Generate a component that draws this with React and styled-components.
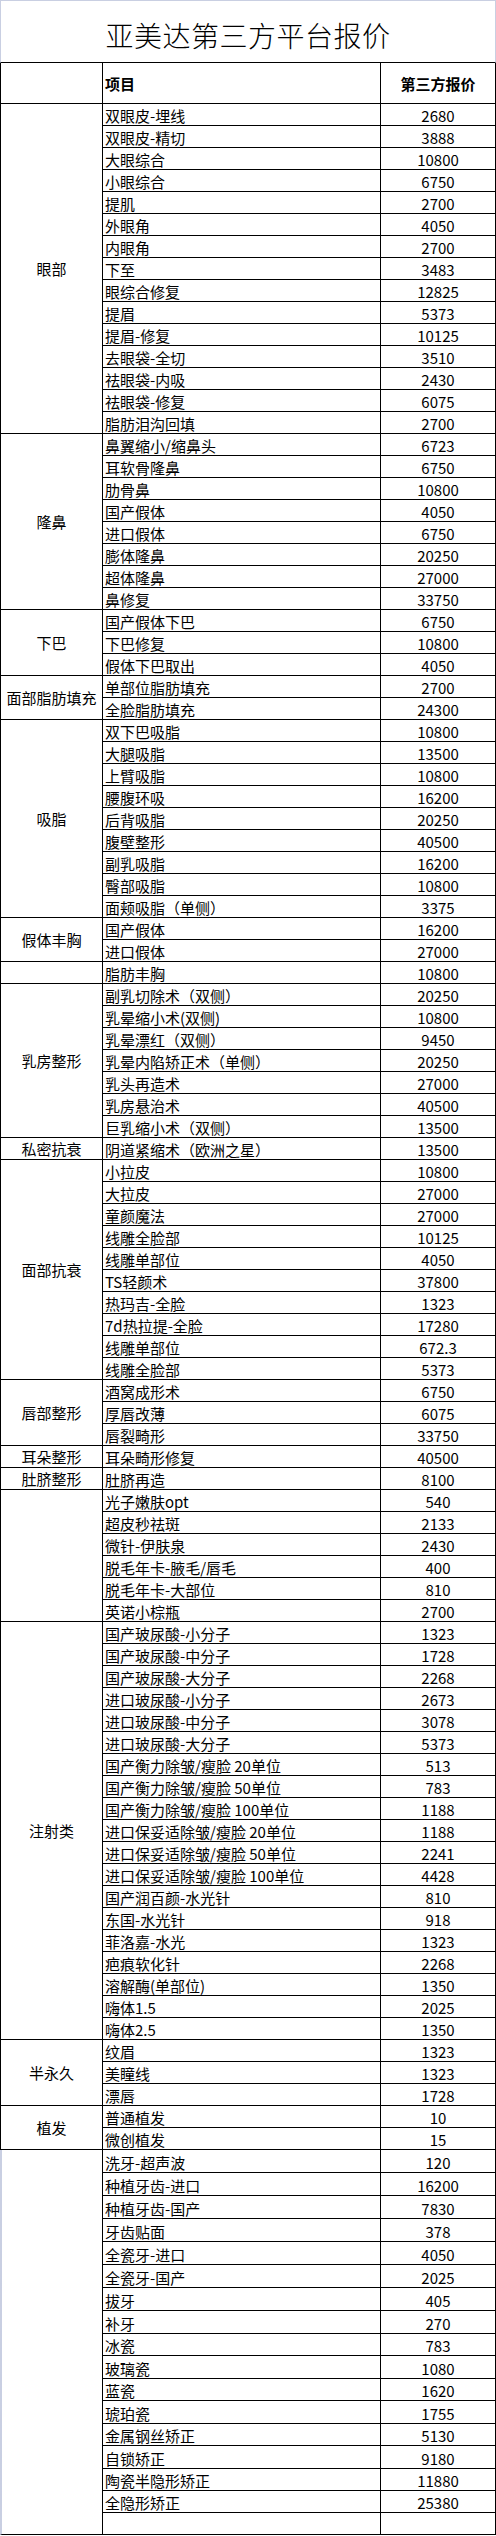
import React from 'react';
import styled, { createGlobalStyle } from 'styled-components';

const GlobalStyle = createGlobalStyle`
    * {
        box-sizing: border-box;
    }
    body {
        margin: 0;
        background: #fff;
        font-family: "Noto Sans CJK SC", "Noto Sans", sans-serif;
        color: #000;
    }
`;

const FRAME = '#c9cfe2';
const LINE = '#000';

const Page = styled.div`
    width: 496px;
    border-top: 1px solid ${FRAME};
`;

// the sheet title uses a thin face, light weight is the closest we have
const Title = styled.h1`
    margin: 0;
    height: 62px;
    padding-top: 6px;
    border-left: 1px solid ${FRAME};
    border-right: 1px solid ${FRAME};
    border-bottom: 1px solid ${LINE};
    display: flex;
    align-items: center;
    justify-content: center;
    font-family: "Noto Sans CJK SC Light", "Noto Sans CJK SC", sans-serif;
    font-size: 28px;
    font-weight: 300;
    letter-spacing: 0.5px;
`;

const Row = styled.div`
    display: flex;
    height: ${(p) => p.$h || 22}px;
    border-bottom: 1px solid ${LINE};
`;

const HeadRow = styled(Row)`
    height: 41px;
    border-left: 1px solid ${LINE};
    font-weight: 700;
    font-size: 15px;
`;

const Cell = styled.div`
    display: flex;
    align-items: center;
    border-right: 1px solid ${LINE};
    font-size: 15px;
    white-space: nowrap;
`;

const Blank = styled(Cell)`
    width: 102px;
`;

const Name = styled(Cell)`
    width: 278px;
    padding: 2px 0 0 2px;
`;

const Price = styled(Cell)`
    flex: 1;
    padding-top: 2px;
    justify-content: center;
`;

const HeadName = styled(Name)`
    padding-top: 0;
`;

const HeadPrice = styled(Price)`
    padding-top: 0;
`;

const Group = styled.div`
    display: flex;
`;

const Category = styled.div`
    width: 103px;
    flex-shrink: 0;
    display: flex;
    align-items: center;
    justify-content: center;
    border-left: ${(p) => (p.$open ? `2px solid ${FRAME}` : `1px solid ${LINE}`)};
    border-right: 1px solid ${LINE};
    border-bottom: 1px solid ${LINE};
    font-size: 15px;
    white-space: nowrap;
`;

const Items = styled.div`
    flex: 1;
    display: flex;
    flex-direction: column;
`;

const groups = [
    { name: '眼部', items: [
        ['双眼皮-埋线', '2680'], ['双眼皮-精切', '3888'], ['大眼综合', '10800'], ['小眼综合', '6750'],
        ['提肌', '2700'], ['外眼角', '4050'], ['内眼角', '2700'], ['下至', '3483'],
        ['眼综合修复', '12825'], ['提眉', '5373'], ['提眉-修复', '10125'], ['去眼袋-全切', '3510'],
        ['祛眼袋-内吸', '2430'], ['祛眼袋-修复', '6075'], ['脂肪泪沟回填', '2700'],
    ] },
    { name: '隆鼻', items: [
        ['鼻翼缩小/缩鼻头', '6723'], ['耳软骨隆鼻', '6750'], ['肋骨鼻', '10800'], ['国产假体', '4050'],
        ['进口假体', '6750'], ['膨体隆鼻', '20250'], ['超体隆鼻', '27000'], ['鼻修复', '33750'],
    ] },
    { name: '下巴', items: [
        ['国产假体下巴', '6750'], ['下巴修复', '10800'], ['假体下巴取出', '4050'],
    ] },
    { name: '面部脂肪填充', items: [
        ['单部位脂肪填充', '2700'], ['全脸脂肪填充', '24300'],
    ] },
    { name: '吸脂', items: [
        ['双下巴吸脂', '10800'], ['大腿吸脂', '13500'], ['上臂吸脂', '10800'], ['腰腹环吸', '16200'],
        ['后背吸脂', '20250'], ['腹壁整形', '40500'], ['副乳吸脂', '16200'], ['臀部吸脂', '10800'],
        ['面颊吸脂（单侧）', '3375'],
    ] },
    { name: '假体丰胸', items: [
        ['国产假体', '16200'], ['进口假体', '27000'],
    ] },
    { name: '', items: [
        ['脂肪丰胸', '10800'],
    ] },
    { name: '乳房整形', items: [
        ['副乳切除术（双侧）', '20250'], ['乳晕缩小术(双侧)', '10800'], ['乳晕漂红（双侧）', '9450'],
        ['乳晕内陷矫正术（单侧）', '20250'], ['乳头再造术', '27000'], ['乳房悬治术', '40500'],
        ['巨乳缩小术（双侧）', '13500'],
    ] },
    { name: '私密抗衰', items: [
        ['阴道紧缩术（欧洲之星）', '13500'],
    ] },
    { name: '面部抗衰', items: [
        ['小拉皮', '10800'], ['大拉皮', '27000'], ['童颜魔法', '27000'], ['线雕全脸部', '10125'],
        ['线雕单部位', '4050'], ['TS轻颜术', '37800'], ['热玛吉-全脸', '1323'], ['7d热拉提-全脸', '17280'],
        ['线雕单部位', '672.3'], ['线雕全脸部', '5373'],
    ] },
    { name: '唇部整形', items: [
        ['酒窝成形术', '6750'], ['厚唇改薄', '6075'], ['唇裂畸形', '33750'],
    ] },
    { name: '耳朵整形', items: [
        ['耳朵畸形修复', '40500'],
    ] },
    { name: '肚脐整形', items: [
        ['肚脐再造', '8100'],
    ] },
    { name: '', items: [
        ['光子嫩肤opt', '540'], ['超皮秒祛斑', '2133'], ['微针-伊肤泉', '2430'],
        ['脱毛年卡-腋毛/唇毛', '400'], ['脱毛年卡-大部位', '810'], ['英诺小棕瓶', '2700'],
    ] },
    { name: '注射类', items: [
        ['国产玻尿酸-小分子', '1323'], ['国产玻尿酸-中分子', '1728'], ['国产玻尿酸-大分子', '2268'],
        ['进口玻尿酸-小分子', '2673'], ['进口玻尿酸-中分子', '3078'], ['进口玻尿酸-大分子', '5373'],
        ['国产衡力除皱/瘦脸 20单位', '513'], ['国产衡力除皱/瘦脸 50单位', '783'],
        ['国产衡力除皱/瘦脸 100单位', '1188'], ['进口保妥适除皱/瘦脸 20单位', '1188'],
        ['进口保妥适除皱/瘦脸 50单位', '2241'], ['进口保妥适除皱/瘦脸 100单位', '4428'],
        ['国产润百颜-水光针', '810'], ['东国-水光针', '918'], ['菲洛嘉-水光', '1323'],
        ['疤痕软化针', '2268'], ['溶解酶(单部位)', '1350'], ['嗨体1.5', '2025'], ['嗨体2.5', '1350'],
    ] },
    { name: '半永久', items: [
        ['纹眉', '1323'], ['美瞳线', '1323'], ['漂唇', '1728'],
    ] },
    { name: '植发', items: [
        ['普通植发', '10'], ['微创植发', '15'],
    ] },
    { name: '', open: true, items: [
        ['洗牙-超声波', '120', 23], ['种植牙齿-进口', '16200', 23], ['种植牙齿-国产', '7830', 23],
        ['牙齿贴面', '378', 23], ['全瓷牙-进口', '4050', 23], ['全瓷牙-国产', '2025', 23],
        ['拔牙', '405', 23], ['补牙', '270', 23], ['冰瓷', '783', 22], ['玻璃瓷', '1080', 23],
        ['蓝瓷', '1620', 22], ['琥珀瓷', '1755', 23], ['金属钢丝矫正', '5130', 22],
        ['自锁矫正', '9180', 23], ['陶瓷半隐形矫正', '11880', 22], ['全隐形矫正', '25380', 22],
        ['', '', 22],
    ] },
];

const App = () => {
    return (
        <Page>
            <GlobalStyle />
            <Title>亚美达第三方平台报价</Title>
            <HeadRow>
                <Blank />
                <HeadName>项目</HeadName>
                <HeadPrice>第三方报价</HeadPrice>
            </HeadRow>
            {groups.map((g, i) => (
                <Group key={i}>
                    <Category $open={g.open}>{g.name}</Category>
                    <Items>
                        {g.items.map(([name, price, h], j) => (
                            <Row key={j} $h={h}>
                                <Name>{name}</Name>
                                <Price>{price}</Price>
                            </Row>
                        ))}
                    </Items>
                </Group>
            ))}
        </Page>
    );
};

export default App;
